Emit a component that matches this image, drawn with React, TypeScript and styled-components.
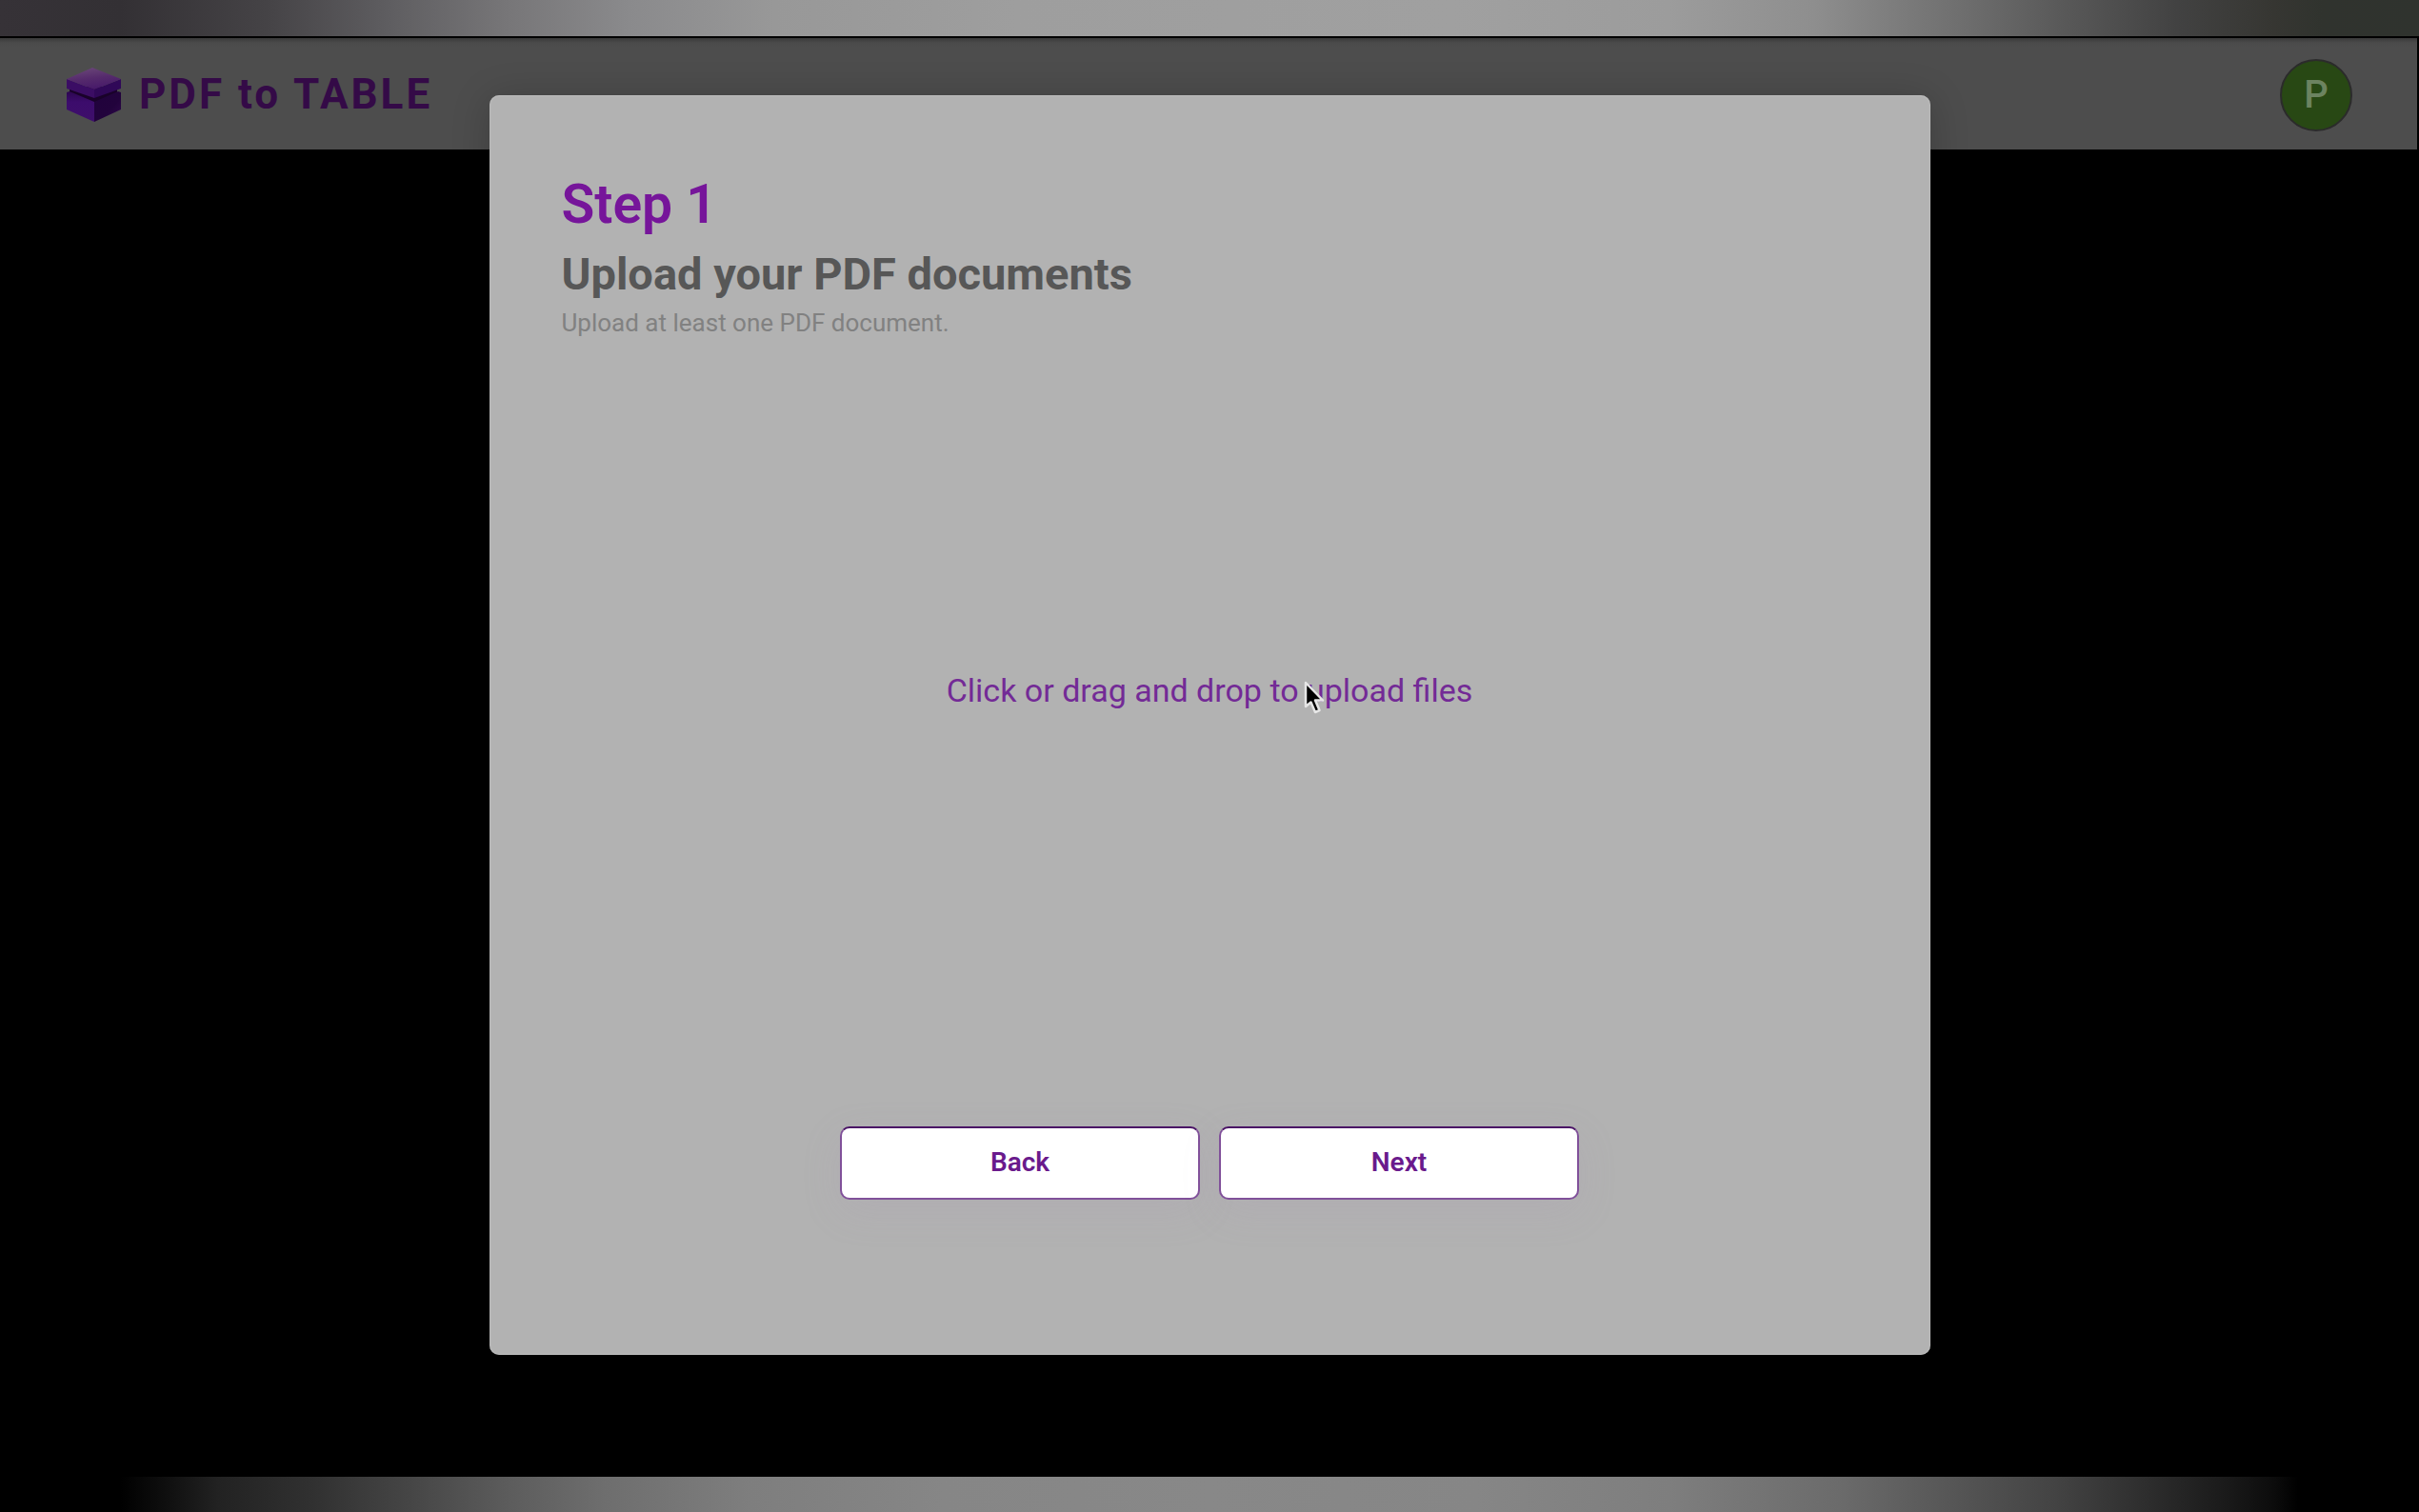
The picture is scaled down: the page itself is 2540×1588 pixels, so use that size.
import React from 'react';
import styled, { createGlobalStyle } from 'styled-components';

const GlobalStyle = createGlobalStyle`
  *, *::before, *::after { box-sizing: border-box; }
  body {
    margin: 0;
    background: #000;
    font-family: Roboto, "Liberation Sans", sans-serif;
  }
  h1, h2, p { margin: 0; }
`;

const Page = styled.div`
  position: relative;
  display: flex;
  flex-direction: column;
  min-height: 100vh;
  background: #000;
`;

const TopGlow = styled.div`
  height: 38px;
  background: linear-gradient(
    90deg,
    #363237 0%, #333034 5%, #454346 11%, #5e5d60 16%, #777678 21%, #8a8a8c 26%,
    #989898 32%, #9e9e9e 42%, #a0a0a0 60%, #9c9c9c 69%, #8e8e8e 75%, #747474 80%,
    #5a5a5a 85%, #424242 90%, #363632 94%, #30332e 96%, #2f332e 100%
  );
`;

const Header = styled.header`
  display: flex;
  align-items: center;
  justify-content: space-between;
  height: 119px;
  padding: 0 68px;
  border-top: 2px solid #000;
  border-right: 2px solid #000;
  background: linear-gradient(180deg, #3a3a3a 0, #4b4b4b 5px, #4d4d4d 10px);
`;

const Brand = styled.a`
  display: flex;
  align-items: center;
  gap: 18px;
  color: #340a47;
  font-size: 44px;
  line-height: 52px;
  font-weight: 700;
  letter-spacing: 3px;
  text-decoration: none;
`;

const Avatar = styled.button`
  width: 76px;
  height: 76px;
  margin-top: 2px;
  padding: 0;
  border: 2px solid #2b2b2b;
  border-radius: 50%;
  background: #284814;
  color: #6c8360;
  font: 500 40px/48px Roboto, "Liberation Sans", sans-serif;
`;

const Spacer = styled.div`
  flex: 1;
`;

const BottomGlow = styled.div`
  height: 37px;
  background: linear-gradient(
    90deg,
    #000 5%, #101010 7%, #222 9%, #313131 13%, #464646 17%, #5c5c5c 21%, #6e6e6e 25%,
    #7e7e7e 31%, #868686 39%, #888 50%, #868686 61%, #7e7e7e 69%, #6b6b6b 76%,
    #595959 80%, #434343 85%, #2c2c2c 89%, #1a1a1a 92%, #0c0c0c 94%, #000 95%
  );
`;

const Overlay = styled.div`
  position: absolute;
  inset: 0;
  display: flex;
  justify-content: center;
  align-items: flex-start;
  padding: 100px 32px;
`;

const Dialog = styled.section`
  position: relative;
  display: flex;
  flex-direction: column;
  width: 100%;
  max-width: 1513px;
  padding: 80px 76px 163px;
  border-radius: 10px;
  background: #b2b2b2;
  box-shadow: 0 4px 40px rgba(0, 0, 0, 0.2), inset 0 0 2px #d0d0d0;
`;

const StepTitle = styled.h1`
  color: #76159a;
  font-size: 57px;
  line-height: 70px;
  font-weight: 600;
`;

const Subtitle = styled.h2`
  margin-top: 10px;
  color: #575757;
  font-size: 47px;
  line-height: 56px;
  font-weight: 700;
`;

const Hint = styled.p`
  margin-top: 6px;
  color: #818181;
  font-size: 26px;
  line-height: 34px;
`;

const DropZone = styled.button`
  height: 738px;
  padding: 0;
  border: 0;
  background: none;
  color: #732a96;
  font: 400 34px/40px Roboto, "Liberation Sans", sans-serif;
`;

const Actions = styled.div`
  display: flex;
  justify-content: center;
  gap: 20px;
  margin-top: 89px;
`;

const ActionButton = styled.button`
  width: 378px;
  height: 77px;
  padding: 0 0 2px;
  border: 2px solid #80509a;
  border-top-color: #4a1266;
  border-radius: 10px;
  background: #fff;
  color: #6a1a8c;
  font: 600 28px/32px Roboto, "Liberation Sans", sans-serif;
  box-shadow: 0 12px 40px rgba(170, 150, 180, 0.15);
`;

const Pointer = styled.svg`
  position: absolute;
  top: 614px;
  left: calc(50% + 98px);
  width: 24px;
  height: 38px;
  pointer-events: none;
`;

function CubeLogo() {
  return (
    <svg width="60" height="60" viewBox="0 0 60 60" aria-hidden="true">
      <defs>
        <linearGradient id="lid" x1="0.3" y1="0" x2="0.6" y2="1">
          <stop offset="0" stopColor="#6a4678" />
          <stop offset="0.5" stopColor="#552a6c" />
          <stop offset="1" stopColor="#46186a" />
        </linearGradient>
        <linearGradient id="side" x1="0" y1="0" x2="1" y2="1">
          <stop offset="0" stopColor="#20023c" />
          <stop offset="0.6" stopColor="#22033c" />
          <stop offset="1" stopColor="#32094e" />
        </linearGradient>
        <linearGradient id="front" x1="0" y1="0" x2="0" y2="1">
          <stop offset="0" stopColor="#2c0650" />
          <stop offset="0.35" stopColor="#3c0c6c" />
          <stop offset="1" stopColor="#3e0f6a" />
        </linearGradient>
      </defs>
      <path d="M5 22H55V30L30 42 5 30Z" fill="#190229" />
      <path d="M2 28 5 27 31 38V59L2 46Z" fill="url(#front)" />
      <path d="M31 38 56 27 59 28V46L31 59Z" fill="url(#side)" />
      <path d="M2 14 31 25V34L2 24Z" fill="#3b0d64" />
      <path d="M31 25 59 14V24L31 34Z" fill="#300858" />
      <path d="M2 14 29 2 59 14 31 25Z" fill="url(#lid)" />
    </svg>
  );
}

export default function App() {
  return (
    <>
      <GlobalStyle />
      <Page>
        <TopGlow />
        <Header>
          <Brand href="#">
            <CubeLogo />
            PDF to TABLE
          </Brand>
          <Avatar type="button">P</Avatar>
        </Header>
        <Spacer />
        <BottomGlow />
        <Overlay>
          <Dialog role="dialog" aria-labelledby="step-title">
            <StepTitle id="step-title">Step 1</StepTitle>
            <Subtitle>Upload your PDF documents</Subtitle>
            <Hint>Upload at least one PDF document.</Hint>
            <DropZone type="button">Click or drag and drop to upload files</DropZone>
            <Actions>
              <ActionButton type="button">Back</ActionButton>
              <ActionButton type="button">Next</ActionButton>
            </Actions>
            <Pointer viewBox="0 0 24 38" aria-hidden="true">
              <path
                d="M3 3V28L8.500 23.500 13 34 17.500 32 13 21.500H21Z"
                fill="#000"
                stroke="#e6e6e6"
                strokeWidth="2.500"
                strokeLinejoin="round"
              />
            </Pointer>
          </Dialog>
        </Overlay>
      </Page>
    </>
  );
}
